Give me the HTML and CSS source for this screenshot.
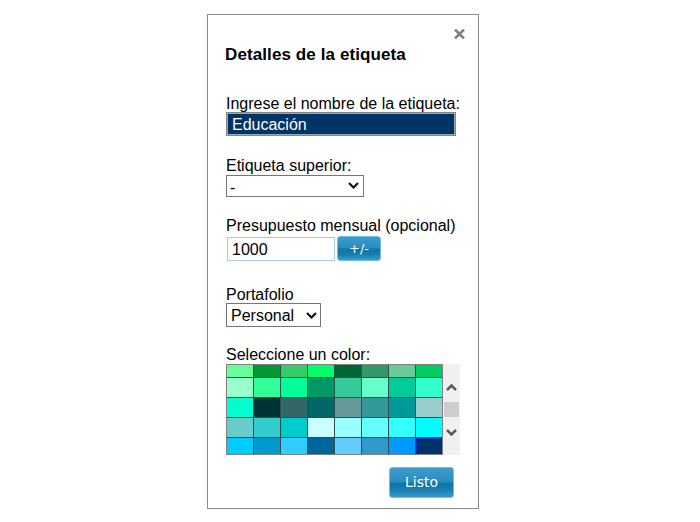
FILE: index.html
```html
<!DOCTYPE html>
<html lang="es">
<head>
<meta charset="utf-8">
<title>Detalles de la etiqueta</title>
<link rel="stylesheet" href="styles.css">
</head>
<body>
<div class="dialog">
  <button class="close" type="button" aria-label="Cerrar">
    <svg width="11" height="10" viewBox="0 0 11 10"><path d="M1 0.5 L10 9.5 M10 0.5 L1 9.5" stroke="#808080" stroke-width="2.6" fill="none"/></svg>
  </button>
  <h2 class="title">Detalles de la etiqueta</h2>

  <label class="lbl l1">Ingrese el nombre de la etiqueta:</label>
  <input class="name" type="text" value="Educación">

  <label class="lbl l2">Etiqueta superior:</label>
  <div class="sel s1">
    <select><option>-</option></select>
    <svg class="chev" width="11" height="7" viewBox="0 0 11 7"><path d="M1 1 L5.5 5.5 L10 1" stroke="#111" stroke-width="2.2" fill="none"/></svg>
  </div>

  <label class="lbl l3">Presupuesto mensual (opcional)</label>
  <div class="budget">
    <input class="amount" type="text" value="1000">
    <button class="btn pm" type="button">+/-</button>
  </div>

  <label class="lbl l4">Portafolio</label>
  <div class="sel s2">
    <select><option>Personal</option></select>
    <svg class="chev" width="11" height="7" viewBox="0 0 11 7"><path d="M1 1 L5.5 5.5 L10 1" stroke="#111" stroke-width="2.2" fill="none"/></svg>
  </div>

  <label class="lbl l5">Seleccione un color:</label>
  <div class="palette">
    <div class="view">
      <div class="grid">
        <span style="background:#66ff99"></span><span style="background:#009933"></span><span style="background:#33cc66"></span><span style="background:#00ff66"></span><span style="background:#006633"></span><span style="background:#339966"></span><span style="background:#66cc99"></span><span style="background:#00cc66"></span>
        <span style="background:#99ffcc"></span><span style="background:#33ff99"></span><span style="background:#00ff99"></span><span style="background:#009966"></span><span style="background:#33cc99"></span><span style="background:#66ffcc"></span><span style="background:#00cc99"></span><span style="background:#33ffcc"></span>
        <span style="background:#00ffcc"></span><span style="background:#003333"></span><span style="background:#336666"></span><span style="background:#006666"></span><span style="background:#669999"></span><span style="background:#339999"></span><span style="background:#009999"></span><span style="background:#99cccc"></span>
        <span style="background:#66cccc"></span><span style="background:#33cccc"></span><span style="background:#00cccc"></span><span style="background:#ccffff"></span><span style="background:#99ffff"></span><span style="background:#66ffff"></span><span style="background:#33ffff"></span><span style="background:#00ffff"></span>
        <span style="background:#00ccff"></span><span style="background:#0099cc"></span><span style="background:#33ccff"></span><span style="background:#006699"></span><span style="background:#66ccff"></span><span style="background:#3399cc"></span><span style="background:#0099ff"></span><span class="selected" style="background:#003366"></span>
      </div>
    </div>
    <div class="scrollbar">
      <svg class="arrow up" width="11" height="7" viewBox="0 0 11 7"><path d="M1 6 L5.5 1.5 L10 6" stroke="#5a5a5a" stroke-width="2.5" fill="none"/></svg>
      <div class="thumb"></div>
      <svg class="arrow down" width="11" height="7" viewBox="0 0 11 7"><path d="M1 1 L5.5 5.5 L10 1" stroke="#5a5a5a" stroke-width="2.5" fill="none"/></svg>
    </div>
  </div>

  <div class="footer">
    <button class="btn done" type="button">Listo</button>
  </div>
</div>
</body>
</html>
```
FILE: styles.css
```css
html, body {
  margin: 0;
  padding: 0;
  background: #fff;
}

body {
  font-family: "Liberation Sans", Arial, sans-serif;
  color: #000;
}

.dialog {
  position: relative;
  box-sizing: border-box;
  width: 272px;
  height: 495px;
  margin: 14px 0 0 207px;
  padding: 0 18px;
  border: 1px solid #8a8a8a;
  background: #fff;
}

.close {
  position: absolute;
  top: 14px;
  right: 13px;
  width: 11px;
  height: 10px;
  padding: 0;
  border: 0;
  background: none;
  display: block;
}
.close svg { display: block; }

.title {
  margin: 30px 0 0 -1px;
  font-size: 17px;
  line-height: 20px;
  height: 20px;
  font-weight: bold;
  letter-spacing: 0.1px;
}

.lbl {
  display: block;
  font-size: 16px;
  line-height: 17px;
  height: 17px;
  white-space: nowrap;
}
.l1 { margin-top: 30px; }
.l2 { margin-top: 21px; }
.l3 { margin-top: 20px; }
.l4 { margin-top: 25px; }
.l5 { margin-top: 19px; }

.name {
  display: block;
  box-sizing: border-box;
  width: 230px;
  height: 24px;
  margin: 0;
  padding: 2px 0 0 5px;
  border: 1px solid #858585;
  box-shadow: inset 0 0 0 1px #9aa6b4;
  background: #003366;
  color: #fff;
  font-family: "Liberation Sans", Arial, sans-serif;
  font-size: 16px;
  outline: none;
}

.sel {
  position: relative;
  box-sizing: border-box;
}
.sel select {
  -webkit-appearance: none;
  appearance: none;
  display: block;
  box-sizing: border-box;
  margin: 0;
  border: 1px solid #767676;
  border-radius: 0;
  background: #fff;
  color: #000;
  font-family: "Liberation Sans", Arial, sans-serif;
  font-size: 16px;
  outline: none;
}
.sel .chev {
  position: absolute;
  display: block;
}
.s1 { margin-top: 1px; width: 138px; height: 22px; }
.s1 select { width: 138px; height: 22px; padding: 2px 0 0 3px; }
.s1 .chev { left: 122px; top: 7px; }
.s2 { width: 95px; height: 24px; }
.s2 select { width: 95px; height: 24px; padding: 1px 0 0 4px; }
.s2 .chev { left: 80px; top: 9px; }

.budget {
  display: flex;
  align-items: flex-start;
  margin-top: 2px;
  height: 25px;
}
.amount {
  box-sizing: border-box;
  width: 108px;
  height: 24px;
  margin: 1px 0 0 1px;
  padding: 1px 0 0 4px;
  border: 1px solid #a6cde6;
  background: #fff;
  color: #000;
  font-family: "Liberation Sans", Arial, sans-serif;
  font-size: 16px;
  outline: none;
}

.btn {
  box-sizing: border-box;
  margin: 0;
  padding: 0;
  border: 1px solid #6ac1e8;
  border-radius: 3px;
  color: #fff;
  font-family: "DejaVu Sans", Verdana, sans-serif;
  background: linear-gradient(to bottom, #3d9ccb 0%, #2c8cbe 48%, #0b74a9 52%, #1a7fb3 78%, #3e98c7 100%);
  text-align: center;
}
.pm {
  width: 44px;
  height: 25px;
  margin-left: 2px;
  font-size: 13px;
  line-height: 23px;
}

.palette {
  display: flex;
  margin-top: 1px;
  height: 91px;
}
.view {
  box-sizing: border-box;
  width: 217px;
  height: 91px;
  border: 1px solid #808080;
  overflow: hidden;
}
.grid {
  display: grid;
  grid-template-columns: repeat(8, 26px);
  grid-auto-rows: 19px;
  gap: 1px;
  background: #2f4f4f;
  margin-top: -7px;
}
.grid span { display: block; }
.grid .selected { box-shadow: inset 1px 1px 0 #0a2bd6; }

.scrollbar {
  display: flex;
  flex-direction: column;
  width: 17px;
  height: 91px;
  background: #f0f0f0;
}
.arrow { display: block; margin-left: 3px; }
.up { margin-top: 20px; }
.thumb {
  width: 15px;
  height: 15px;
  margin: 11px 0 0 1px;
  background: #cdcdcd;
}
.down { margin-top: 12px; }

.footer {
  display: flex;
  justify-content: flex-end;
  margin-top: 12px;
  padding-right: 6px;
}
.done {
  width: 65px;
  height: 31px;
  font-size: 14px;
  line-height: 29px;
}
```
